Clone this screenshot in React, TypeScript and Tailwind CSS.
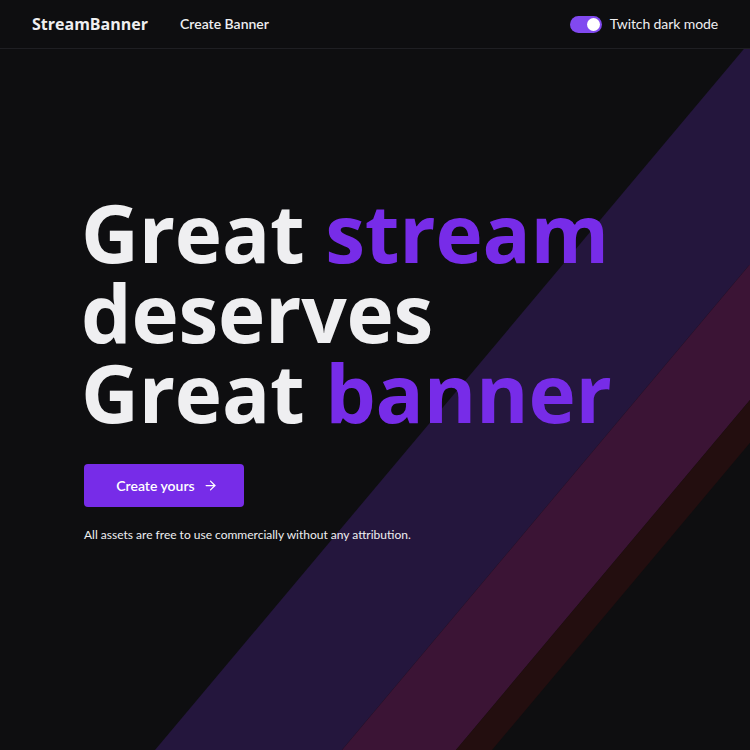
import { ArrowRight } from "lucide-react";
import { useState } from "react";

function Stripes() {
  // bands measured at the bottom edge (y = 750), slope 0.84 px across per px down
  const k = 0.84;
  const top = 49;
  const at = (x: number, y: number) => x + k * (750 - y);
  const band = (l: number, r: number) =>
    `${at(l, top)},${top} ${at(r, top)},${top} ${r},750 ${l},750`;

  return (
    <svg
      className="pointer-events-none absolute left-0 top-0"
      width={750}
      height={701}
      viewBox="0 49 750 701"
    >
      <polygon points={band(155, 342)} fill="#24163d" />
      <polygon points={band(342, 456)} fill="#3b1435" />
      <polygon points={band(456, 492)} fill="#230e0f" />
    </svg>
  );
}

export default function App() {
  const [dark, setDark] = useState(true);

  return (
    <div className="min-h-[750px] w-[750px] bg-[#0e0e10] font-['Lato',sans-serif] text-[#efeff1]">
      <header className="flex h-[49px] items-center justify-between border-b border-[#1f1f23] pl-8 pr-8">
        <div className="flex items-center gap-8">
          <span className="font-['Open_Sans',sans-serif] text-base font-bold">StreamBanner</span>
          <a className="text-sm font-semibold">Create Banner</a>
        </div>
        <label className="flex items-center gap-2 text-sm">
          <button
            onClick={() => setDark(!dark)}
            className={`flex h-[17px] w-8 items-center rounded-full px-[2px] ${
              dark ? "justify-end bg-[#8149f0]" : "justify-start bg-[#53535f]"
            }`}
          >
            <span className="h-[13px] w-[13px] rounded-full bg-white" />
          </button>
          <span className="tracking-[-0.1px]">Twitch dark mode</span>
        </label>
      </header>

      <main className="relative h-[701px] overflow-hidden">
        <Stripes />
        <div className="relative px-[81px] pt-[143px]">
          <h1 className="font-['Open_Sans',sans-serif] text-[80px] font-bold leading-[80px] tracking-[-0.2px]">
            Great <span className="text-[#772ce8]">stream</span>
            <br />
            deserves
            <br />
            Great <span className="text-[#772ce8]">banner</span>
          </h1>
          <button className="ml-[3px] mt-8 flex h-[43px] w-40 items-center justify-center gap-2 rounded bg-[#772ce8] pl-[6px] text-sm font-semibold text-white">
            Create yours
            <ArrowRight size={15} strokeWidth={2} />
          </button>
          <p className="ml-[3px] mt-5 text-xs">
            All assets are free to use commercially without any attribution.
          </p>
        </div>
      </main>
    </div>
  );
}
